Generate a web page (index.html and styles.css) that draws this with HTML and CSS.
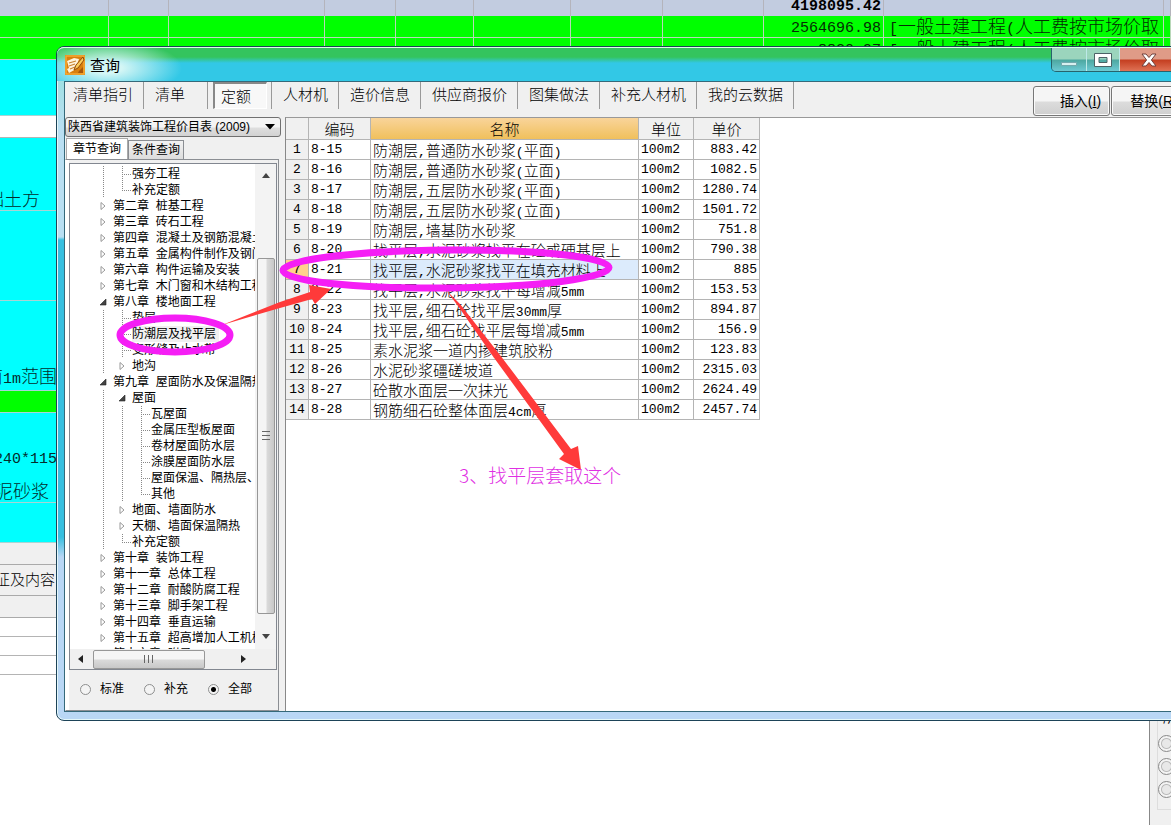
FILE: index.html
```
<!DOCTYPE html>
<html lang="zh-CN">
<head>
<meta charset="utf-8">
<title>查询</title>
<link rel="stylesheet" href="styles.css">
</head>
<body>
<svg class="defs" aria-hidden="true">
  <symbol id="closed" viewBox="0 0 8 10"><path d="M2 1.5v7l4-3.5z" fill="#fff" stroke="#999"/></symbol>
  <symbol id="open" viewBox="0 0 8 10"><path d="M7 2v6H1z" fill="#444" stroke="#222" stroke-width=".6"/></symbol>
</svg>

<main class="project">
  <div class="sheet">
    <div class="line total"><i></i><i></i><i></i><i></i><i></i><i></i><i></i><i></i><b class="num">4198095.42</b><i></i><i></i></div>
    <div class="line green"><i></i><i></i><i></i><i></i><i></i><i></i><i></i><i></i><span class="num">2564696.98</span><span class="fee"><span class="num">[</span>一般土建工程<span class="num">(</span>人工费按市场价取</span><i></i></div>
    <div class="line green"><i></i><i></i><i></i><i></i><i></i><i></i><i></i><i></i><span class="num">8820.97</span><span class="fee"><span class="num">[</span>一般土建工程<span class="num">(</span>人工费按市场价取</span><i></i></div>
  </div>
  <div class="lower">
    <div class="items">
      <div class="item h56"></div>
      <div class="item h22 white"></div>
      <div class="item h73 bottom"><span>础土方</span></div>
      <div class="item h90"></div>
      <div class="item h90 bottom edge"><span>前<span class="num">1m</span>范围</span></div>
      <div class="item h22 green"></div>
      <div class="item h90 stack"><span class="num">240*115</span><span>泥砂浆</span></div>
      <div class="item h40"></div>
      <div class="item h22 gray"></div>
      <div class="item h31 gray label">特征及内容</div>
      <div class="item h22 gray"></div>
      <div class="item h19 white"></div>
      <div class="item h19 white"></div>
      <div class="item h19 white"></div>
    </div>
    <aside class="side">
      <fieldset class="choices">
        <legend>所</legend>
        <input type="radio" name="scope" aria-label="范围一">
        <input type="radio" name="scope" aria-label="范围二">
        <input type="radio" name="scope" aria-label="范围三">
      </fieldset>
    </aside>
  </div>
</main>

<section class="window" aria-label="查询">
  <header class="titlebar">
    <svg class="logo" viewBox="0 0 20 20" aria-hidden="true">
      <rect width="20" height="20" fill="#d9800f"/>
      <path d="M1 1h18v18H1z" fill="none" stroke="#f5a834" stroke-width="1.5"/>
      <path d="M2 6l7-3 5 1-1 3-2 7-7 4-2-4 2-1z" fill="#fff4dc"/>
      <path d="M4 8l7-2M4 11l6-2M5 14l5-2" stroke="#c98332" stroke-width="1.3"/>
      <path d="M18 2l-7 8-2 5 4-2 6-8z" fill="#f8c95a" stroke="#944a08"/>
      <path d="M14 16l4-4v6h-5z" fill="#a8570a"/>
    </svg>
    <h1>查询</h1>
    <div class="controls">
      <button class="min" aria-label="最小化"><svg viewBox="0 0 20 14"><path d="M2.5 9.500h15v3h-15z" fill="#d7f0f0" stroke="#72a9ad"/></svg></button>
      <button class="max" aria-label="最大化"><svg viewBox="0 0 20 14"><path fill-rule="evenodd" d="M1.500.5h17v13h-17zM6 4.500v5h8v-5z" fill="#fff" stroke="#4c6266"/></svg></button>
      <button class="close" aria-label="关闭"><svg viewBox="0 0 20 14"><path d="M3 1h4l3 3.500L13 1h4l-4.600 6 4.600 6h-4l-3-3.500L7 13H3l4.600-6z" fill="#fff" stroke="#70403c"/></svg></button>
    </div>
  </header>

  <div class="client">
    <div class="toolbar">
      <nav class="tabs">
        <button>清单指引</button><button class="wide">清单</button><button class="active">定额</button><button>人材机</button><button>造价信息</button><button>供应商报价</button><button>图集做法</button><button>补充人材机</button><button>我的云数据</button>
      </nav>
      <div class="actions"><button>插入(<u>I</u>)</button><button>替换(<u>R</u>)</button></div>
    </div>

    <div class="panes">
      <div class="left">
        <div class="combo">
          <select aria-label="定额库"><option>陕西省建筑装饰工程价目表 (2009)</option></select>
          <svg viewBox="0 0 10 6" aria-hidden="true"><path d="M0 0h10L5 5.500z"/></svg>
        </div>
        <div class="subtabs"><button class="on">章节查询</button><button>条件查询</button></div>
        <div class="chapter">
          <div class="treebox">
            <div class="treerow">
              <ul class="tree">
                <li><i class="guide"></i><i class="leaf"></i>强夯工程</li>
                <li><i class="guide"></i><i class="leaf last"></i>补充定额</li>
                <li><svg><use href="#closed"/></svg>第二章&nbsp; 桩基工程</li>
                <li><svg><use href="#closed"/></svg>第三章&nbsp; 砖石工程</li>
                <li><svg><use href="#closed"/></svg>第四章&nbsp; 混凝土及钢筋混凝土工程</li>
                <li><svg><use href="#closed"/></svg>第五章&nbsp; 金属构件制作及钢门窗</li>
                <li><svg><use href="#closed"/></svg>第六章&nbsp; 构件运输及安装</li>
                <li><svg><use href="#closed"/></svg>第七章&nbsp; 木门窗和木结构工程</li>
                <li><svg><use href="#open"/></svg>第八章&nbsp; 楼地面工程</li>
                <li><i class="guide"></i><i class="leaf"></i>垫层</li>
                <li><i class="guide"></i><i class="leaf"></i><span class="picked">防潮层及找平层</span></li>
                <li><i class="guide"></i><i class="leaf"></i>变形缝及止水带</li>
                <li><i class="guide"></i><svg><use href="#closed"/></svg>地沟</li>
                <li><svg><use href="#open"/></svg>第九章&nbsp; 屋面防水及保温隔热</li>
                <li><i class="guide"></i><svg><use href="#open"/></svg>屋面</li>
                <li><i class="guide"></i><i class="guide"></i><i class="leaf"></i>瓦屋面</li>
                <li><i class="guide"></i><i class="guide"></i><i class="leaf"></i>金属压型板屋面</li>
                <li><i class="guide"></i><i class="guide"></i><i class="leaf"></i>卷材屋面防水层</li>
                <li><i class="guide"></i><i class="guide"></i><i class="leaf"></i>涂膜屋面防水层</li>
                <li><i class="guide"></i><i class="guide"></i><i class="leaf"></i>屋面保温、隔热层、</li>
                <li><i class="guide"></i><i class="guide"></i><i class="leaf last"></i>其他</li>
                <li><i class="guide"></i><svg><use href="#closed"/></svg>地面、墙面防水</li>
                <li><i class="guide"></i><svg><use href="#closed"/></svg>天棚、墙面保温隔热</li>
                <li><i class="guide"></i><i class="leaf last"></i>补充定额</li>
                <li><svg><use href="#closed"/></svg>第十章&nbsp; 装饰工程</li>
                <li><svg><use href="#closed"/></svg>第十一章&nbsp; 总体工程</li>
                <li><svg><use href="#closed"/></svg>第十二章&nbsp; 耐酸防腐工程</li>
                <li><svg><use href="#closed"/></svg>第十三章&nbsp; 脚手架工程</li>
                <li><svg><use href="#closed"/></svg>第十四章&nbsp; 垂直运输</li>
                <li><svg><use href="#closed"/></svg>第十五章&nbsp; 超高增加人工机械</li>
                <li><svg><use href="#closed"/></svg>第十六章&nbsp; 附录</li>
              </ul>
              <div class="vscroll">
                <svg class="up" viewBox="0 0 8 5"><path d="M0 5l4-5 4 5z"/></svg>
                <div class="thumb"><svg viewBox="0 0 8 10"><path d="M0 .5h8M0 4.500h8M0 8.500h8" stroke="#666"/></svg></div>
                <svg class="down" viewBox="0 0 8 5"><path d="M0 0l4 5 4-5z"/></svg>
              </div>
            </div>
            <div class="hscroll">
              <svg viewBox="0 0 5 8"><path d="M5 0L0 4l5 4z"/></svg>
              <div class="thumb"><svg viewBox="0 0 10 8"><path d="M.5 0v8M4.500 0v8M8.500 0v8" stroke="#666"/></svg></div>
              <svg viewBox="0 0 5 8"><path d="M0 0l5 4-5 4z"/></svg>
            </div>
          </div>
          <div class="radios">
            <label><input type="radio" name="kind">标准</label>
            <label><input type="radio" name="kind">补充</label>
            <label><input type="radio" name="kind" checked>全部</label>
          </div>
        </div>
      </div>

      <div class="right">
        <table>
          <colgroup><col class="c1"><col class="c2"><col class="c3"><col class="c4"><col class="c5"></colgroup>
          <thead><tr><th></th><th>编码</th><th class="hot">名称</th><th>单位</th><th>单价</th></tr></thead>
          <tbody>
            <tr><th>1</th><td>8-15</td><td class="name">防潮层<s>,</s>普通防水砂浆<s>(</s>平面<s>)</s></td><td>100m2</td><td>883.42</td></tr>
            <tr><th>2</th><td>8-16</td><td class="name">防潮层<s>,</s>普通防水砂浆<s>(</s>立面<s>)</s></td><td>100m2</td><td>1082.5</td></tr>
            <tr><th>3</th><td>8-17</td><td class="name">防潮层<s>,</s>五层防水砂浆<s>(</s>平面<s>)</s></td><td>100m2</td><td>1280.74</td></tr>
            <tr><th>4</th><td>8-18</td><td class="name">防潮层<s>,</s>五层防水砂浆<s>(</s>立面<s>)</s></td><td>100m2</td><td>1501.72</td></tr>
            <tr><th>5</th><td>8-19</td><td class="name">防潮层<s>,</s>墙基防水砂浆</td><td>100m2</td><td>751.8</td></tr>
            <tr><th>6</th><td>8-20</td><td class="name">找平层<s>,</s>水泥砂浆找平在砼或硬基层上</td><td>100m2</td><td>790.38</td></tr>
            <tr class="current"><th>7</th><td>8-21</td><td class="name">找平层<s>,</s>水泥砂浆找平在填充材料上</td><td>100m2</td><td>885</td></tr>
            <tr><th>8</th><td>8-22</td><td class="name">找平层<s>,</s>水泥砂浆找平每增减<s>5mm</s></td><td>100m2</td><td>153.53</td></tr>
            <tr><th>9</th><td>8-23</td><td class="name">找平层<s>,</s>细石砼找平层<s>30mm</s>厚</td><td>100m2</td><td>894.87</td></tr>
            <tr><th>10</th><td>8-24</td><td class="name">找平层<s>,</s>细石砼找平层每增减<s>5mm</s></td><td>100m2</td><td>156.9</td></tr>
            <tr><th>11</th><td>8-25</td><td class="name">素水泥浆一道内掺建筑胶粉</td><td>100m2</td><td>123.83</td></tr>
            <tr><th>12</th><td>8-26</td><td class="name">水泥砂浆礓磋坡道</td><td>100m2</td><td>2315.03</td></tr>
            <tr><th>13</th><td>8-27</td><td class="name">砼散水面层一次抹光</td><td>100m2</td><td>2624.49</td></tr>
            <tr><th>14</th><td>8-28</td><td class="name">钢筋细石砼整体面层<s>4cm</s>厚</td><td>100m2</td><td>2457.74</td></tr>
          </tbody>
        </table>
      </div>
    </div>
  </div>
</section>

<svg class="marks" width="640" height="480" viewBox="0 0 640 480" aria-hidden="true">
  <g fill="#ff3a3a">
    <path d="M222 325L280 302L310 292L309 285L331 289L315 304L312 299L280 308z"/>
    <path d="M446 290L460 304L500 355L571 449L578 446L581 470L559 459L564 454L492 355L458 306z"/>
  </g>
  <g fill="none" stroke="#f51ef5">
    <ellipse cx="446" cy="269" rx="163" ry="19" stroke-width="7" transform="rotate(-.5 446 269)"/>
    <ellipse cx="175" cy="335" rx="55" ry="17" stroke-width="7"/>
  </g>
</svg>
<p class="note">3、找平层套取这个</p>
</body>
</html>
```
FILE: styles.css
```
* { box-sizing: border-box; }
body {
  margin: 0;
  min-height: 100vh;
  position: relative;
  overflow: hidden;
  background: #fff;
  color: #000;
  font: 400 12px/16px "Liberation Sans", "Noto Sans CJK SC", sans-serif;
}
button, select, input { font: inherit; color: inherit; margin: 0; }
button { padding: 0; border: 0; background: none; }
i { font-style: normal; }
.defs { position: absolute; width: 0; height: 0; }

/* project sheet behind the dialog */
.project { display: flex; flex-direction: column; min-height: 100vh; }
.line {
  display: grid;
  grid-template-columns: 109px 60px 156px 71px 78px 97px 92px 101px 120px 280px 1fr;
  height: 22px;
  line-height: 23px;
  border-bottom: 1px solid #b8d8b8;
  overflow: hidden;
}
.line > * { border-right: 1px solid #b8d8b8; white-space: nowrap; overflow: hidden; }
.line > .num { text-align: right; padding-right: 2px; line-height: 25px; }
.line.total { height: 16px; background: #c2cce0; border: 0; }
.line.total > * { border-color: #b4b4bc; }
.line.total > .num { line-height: 14px; font-weight: 700; }
.num { font-family: "Liberation Mono", monospace; font-size: 15px; }
.fee { font-size: 18px; font-weight: 300; padding-left: 5px; color: #042c04; }
.line span.num { color: #042c04; }
.green { background: #0f0; }
.lower { flex: 1; display: flex; justify-content: space-between; }
.items { width: 57px; overflow: hidden; font-size: 18px; font-weight: 300; line-height: 20px; color: #042c2c; }
.item {
  display: flex;
  justify-content: flex-end;
  padding-right: 17px;
  background: #0ff;
  border-bottom: 1px solid #a8d4d4;
  white-space: nowrap;
}
.item.bottom { align-items: flex-end; }
.item.edge { padding-right: 0; }
.item.stack { flex-direction: column; gap: 12px; align-items: flex-end; padding: 0 8px 0 0; }
.item.stack .num { margin-right: -8px; }
.item.white { background: #fff; border-color: #b4b4b4; }
.item.green { background: #0f0; }
.item.gray { background: #f0f0f0; border-color: #aaa; }
.item.label { align-items: center; padding-right: 2px; font-size: 15px; color: #000; }
.h56 { height: 56px; } .h22 { height: 22px; } .h73 { height: 73px; } .h90 { height: 90px; }
.h40 { height: 40px; } .h31 { height: 31px; } .h19 { height: 19px; }
.side {
  width: 22px;
  display: flex;
  align-items: flex-end;
  padding: 0 0 15px 7px;
  background: #f0f0f0;
  border-left: 1px solid #888;
  overflow: hidden;
}
.choices {
  flex: none;
  width: 60px;
  display: flex;
  flex-direction: column;
  gap: 6px;
  margin: 0;
  padding: 8px 0 11px;
  border: 1px solid #ddd;
}
.choices legend { padding: 0 0 0 5px; }
.choices input {
  appearance: none;
  width: 17px;
  height: 17px;
  border: 1px solid #888;
  border-radius: 50%;
  background: radial-gradient(#e8e8e8 0 4px, #bbb 5px, #f4f4f4 6px);
}

/* dialog window */
.window {
  position: absolute;
  left: 56px;
  top: 46px;
  right: -30px;
  padding: 0 8px 8px 7px;
  border: 1px solid #1d4358;
  border-radius: 8px;
  background: linear-gradient(#8ee0d8, #b9dff2 80px, #b9dff2 190px, #36bfe0 193px, #36bfe0 490px, #b9d7f5 510px);
  box-shadow: inset 0 0 0 1px #e4f7fa;
}
.titlebar {
  display: flex;
  align-items: center;
  gap: 5px;
  height: 34px;
  margin: 0 -7px;
  padding: 0 20px 0 8px;
  border-top: 1px solid #d9ffe8;
  border-radius: 7px 7px 0 0;
  background:
    radial-gradient(ellipse 75px 28px at 50px 20px, #d4f6f5 20%, transparent),
    linear-gradient(#34c45e 0 9px, #32c8e6 15px);
}
.logo { width: 20px; height: 20px; }
.titlebar h1 { flex: 1; margin: 0; font: 400 15px/20px "Noto Sans CJK SC", sans-serif; }
.controls {
  align-self: flex-start;
  display: flex;
  height: 24px;
  border: 1px solid #27636c;
  border-top: 0;
  border-radius: 0 0 5px 5px;
  overflow: hidden;
}
.controls button { width: 33px; border-right: 1px solid #bde9e8; background: linear-gradient(#9bd5bd 0 11px, #4da7a0 12px, #6cc9d3); }
.controls .min { width: 35px; }
.controls .close { width: 58px; border: 0; background: linear-gradient(#df9b87 0 11px, #c43e20 12px, #df7255); }
.controls svg { width: 20px; height: 14px; display: block; margin: 0 auto; }
.client { background: #f0f0f0; border: 1px solid #35697a; border-right: 0; }
.toolbar { display: flex; justify-content: space-between; height: 35px; overflow: hidden; }
.tabs { display: flex; height: 27px; font-size: 15px; font-weight: 300; line-height: 25px; white-space: nowrap; }
.tabs button { padding: 0 10px 2px 11px; border-right: 1px solid #999; text-align: left; }
.tabs button:first-child { padding-left: 8px; }
.tabs .wide { width: 64px; }
.tabs .active {
  width: 54px;
  margin: 0 4px 0 5px;
  padding: 0 6px;
  border: 1px solid #fff;
  border-top: 2px solid #888;
  border-left: 2px solid #888;
  background: #f8f8f8;
}
.tabs .active + button { border-left: 1px solid #999; }
.actions { display: flex; gap: 1px; padding-top: 4px; }
.actions button {
  width: 77px;
  height: 30px;
  padding-left: 18px;
  border: 1px solid #777;
  border-radius: 3px;
  background: linear-gradient(#f5f5f5 0 14px, #dcdcdc 15px, #cfcfcf);
  box-shadow: inset 0 0 0 1px #fafafa;
  font-size: 14px;
}
.actions button:last-child { width: 81px; padding-left: 5px; }
.panes { display: flex; }
.left { width: 216px; flex: none; }
.combo { display: grid; grid-template-columns: 1fr 20px; align-items: center; }
.combo select {
  grid-area: 1 / 1 / 2 / 3;
  appearance: none;
  width: 100%;
  height: 20px;
  padding: 0 2px;
  border: 1px solid #707070;
  border-radius: 3px;
  background: linear-gradient(#f4f4f4 0 9px, #dedede 10px, #d2d2d2);
}
.combo svg { grid-area: 1 / 2; width: 10px; height: 6px; pointer-events: none; margin-left: 4px; }
.subtabs { display: flex; align-items: flex-end; height: 22px; padding-left: 1px; }
.subtabs button { width: 56px; height: 19px; border: 1px solid #8b8e93; border-bottom: 0; background: linear-gradient(#f2f2f2, #ddd); }
.subtabs .on { width: 62px; height: 21px; background: #fff; border-color: #aaa; }
.chapter { width: 214px; padding: 3px 1px 0 3px; border: 1px solid #8b8e93; border-left-color: #fff; background: linear-gradient(90deg, #fff 3px, #f0f0f0 3px); }
.treebox { border: 1px solid #828790; background: #fff; }
.treerow { display: flex; height: 485px; }
.tree { flex: 1; min-width: 0; margin: 0; padding: 2px 0 0 29px; list-style: none; overflow: hidden; }
.tree li { display: flex; height: 16px; white-space: nowrap; }
.tree svg { flex: none; width: 8px; height: 10px; margin: 3px 6px 0 0; }
.guide, .leaf { flex: none; width: 19px; background: repeating-linear-gradient(#888 0 1px, transparent 1px 2px) 4px 0 / 1px 100% no-repeat; }
.leaf {
  width: 14px;
  background:
    repeating-linear-gradient(#888 0 1px, transparent 1px 2px) 4px 0 / 1px 100% no-repeat,
    repeating-linear-gradient(90deg, #888 0 1px, transparent 1px 2px) 4px 8px / 9px 1px no-repeat;
}
.leaf.last { background-size: 1px 9px, 9px 1px; }
.picked { background: #f0f0f0; padding-right: 3px; }
.vscroll { width: 21px; display: flex; flex-direction: column; align-items: center; background: #f3f3f3; padding: 9px 0; }
.vscroll .up, .vscroll .down { width: 8px; height: 5px; fill: #444; }
.thumb { display: flex; align-items: center; justify-content: center; border: 1px solid #979797; border-radius: 2px; }
.vscroll .thumb { width: 18px; height: 356px; margin: 80px 0 20px; background: linear-gradient(90deg, #f5f5f5 0 8px, #dadada 9px, #c8c8c8); }
.vscroll .thumb svg { width: 8px; height: 10px; }
.hscroll { display: flex; align-items: center; height: 20px; padding: 0 27px 0 8px; background: #f0f0f0; }
.hscroll > svg { width: 5px; height: 8px; fill: #222; }
.hscroll .thumb { width: 112px; height: 19px; margin: 0 36px 0 10px; background: linear-gradient(#f5f5f5 0 8px, #dadada 9px, #c8c8c8); }
.hscroll .thumb svg { width: 10px; height: 8px; }
.radios { display: flex; gap: 20px; padding: 11px 11px 13px; }
.radios label { display: flex; align-items: center; gap: 9px; white-space: nowrap; }
.radios input {
  flex: none;
  appearance: none;
  width: 11px;
  height: 11px;
  border: 1px solid #8e8f8f;
  border-radius: 50%;
  background: #f4f4f4;
}
.radios input:checked { background: radial-gradient(#000 0 2px, #f4f4f4 3px); }
.right { flex: 1; margin-left: 4px; border-left: 1px solid #888; border-top: 1px solid #999; background: #fff; }
table { border-collapse: separate; border-spacing: 0; table-layout: fixed; width: 474px; }
.c1 { width: 23px; } .c2 { width: 62px; } .c3 { width: 268px; } .c4 { width: 55px; } .c5 { width: 66px; }
td, th {
  height: 20px;
  padding: 0 2px;
  border-right: 1px solid #b4b4b4;
  border-bottom: 1px solid #b4b4b4;
  font: 400 13px/18px "Liberation Mono", monospace;
  text-align: left;
  vertical-align: middle;
  white-space: nowrap;
}
th { background: #f0f0f0; text-align: center; padding: 0; }
thead th { height: 22px; }
thead th, td.name { font: 300 15px/18px "Noto Sans CJK SC", sans-serif; }
td:last-child { text-align: right; }
td.name { overflow: hidden; }
s { text-decoration: none; font: 400 13px/1 "Liberation Mono", monospace; }
.hot { background: linear-gradient(#f9d49a, #f0c05c); }
.current th { background: #ffd28c; }
.current .name { background: #dcebfc; }

/* hand-drawn annotations */
.marks { position: absolute; left: 0; top: 0; pointer-events: none; }
.note { position: absolute; left: 459px; top: 463px; margin: 0; color: #df2fe3; font: 300 19px/24px "Noto Sans CJK SC", sans-serif; }
```
